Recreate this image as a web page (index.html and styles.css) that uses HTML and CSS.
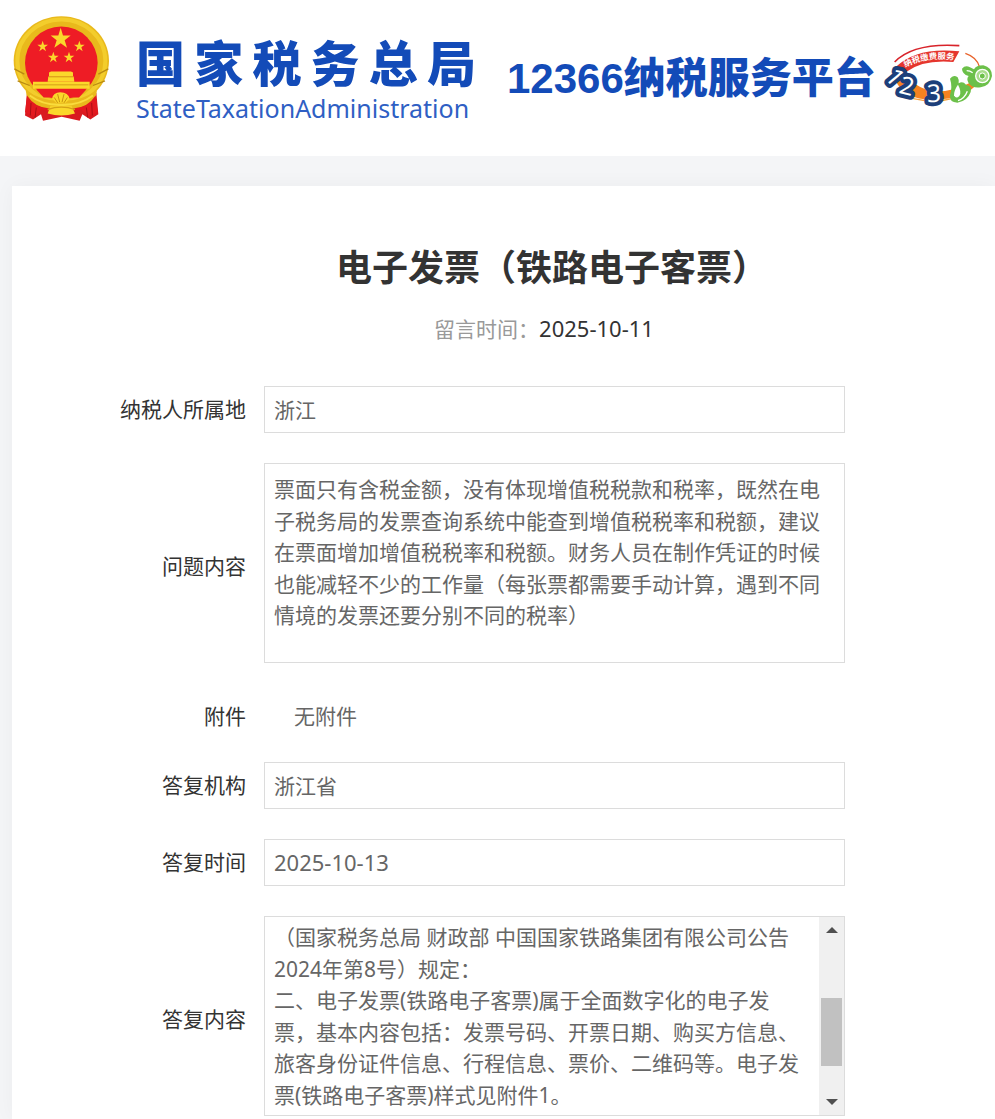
FILE: index.html
```html
<!DOCTYPE html>
<html lang="zh-CN">
<head>
    <meta charset="UTF-8">
    <meta name="viewport" content="width=device-width, initial-scale=1.0">
    <title>电子发票（铁路电子客票）</title>
    <link rel="stylesheet" href="styles.css">
</head>
<body>
    <header class="header">
        <!-- 国徽 -->
        <svg class="emblem" viewBox="0 0 291 321" aria-hidden="true">
            <path d="M42 232 L36 300 L60 312 L84 296 L90 316 L146 304 L200 316 L208 296 L232 312 L256 296 L250 232Z" fill="#d91a20"/>
            <ellipse cx="145" cy="136" rx="143" ry="134" fill="#e9b91c"/>
            <ellipse cx="145" cy="136" rx="132" ry="124" fill="none" stroke="#f3cd2c" stroke-width="12"/>
            <path d="M4 160 L34 176 M14 196 L50 210 M286 160 L256 176 M276 196 L240 210" stroke="#b98a12" stroke-width="4"/>
            <circle cx="145" cy="142" r="109" fill="#ee1c25"/>
            <g fill="#fbd72b">
                <path d="M143 37 L150 60 L173 60 L155 74 L162 97 L143 83 L124 97 L131 74 L113 60 L136 60Z"/>
                <path d="M89 76 L93 88 L105 88 L95 95 L99 107 L89 100 L79 107 L83 95 L73 88 L85 88Z"/>
                <path d="M199 76 L203 88 L215 88 L205 95 L209 107 L199 100 L189 107 L193 95 L183 88 L195 88Z"/>
                <path d="M121 109 L125 121 L137 121 L127 128 L131 140 L121 133 L111 140 L115 128 L105 121 L117 121Z"/>
                <path d="M168 109 L172 121 L184 121 L174 128 L178 140 L168 133 L158 140 L162 128 L152 121 L164 121Z"/>
                <path d="M108 171 L114 168 H174 L180 171 V183 H108Z"/>
                <path d="M106 183 H182 L184 199 H104Z"/>
                <path d="M60 199 H230 V220 H60Z"/>
            </g>
            <path d="M108 184 H180 M64 208 H226" stroke="#d5a017" stroke-width="3"/>
            <path d="M38 224 Q88 258 145 256 Q202 258 252 224 L246 256 Q200 286 145 284 Q90 286 44 256Z" fill="#e9b91c"/>
            <path d="M70 222 H220 L198 246 H92Z" fill="#ee1c25"/>
            <path d="M50 240 Q90 270 145 268 Q200 270 240 240" fill="none" stroke="#f9dc3c" stroke-width="6"/>
            <path d="M117 250 Q120 230 142 230 Q166 230 170 250 L158 262 H130Z" fill="#fbd72b"/>
            <path d="M124 246 L134 262 M134 236 L140 260 M153 236 L147 260 M163 246 L153 262" stroke="#c9920f" stroke-width="3"/>
            <path d="M42 240 Q66 276 106 278 Q145 286 184 278 Q224 276 248 240 L254 290 L226 302 L204 282 L145 296 L86 282 L64 302 L36 290Z" fill="#e3191f"/>
            <path d="M112 272 H176 L186 294 Q145 306 104 294Z" fill="#fbd72b"/>
            <path d="M104 282 Q145 268 186 282" fill="none" stroke="#d5a017" stroke-width="4"/>
            <path d="M54 262 L52 300 M70 276 L66 306 M236 262 L238 300 M220 276 L224 306" stroke="#a80f15" stroke-width="3"/>
        </svg>
        <div class="brand">
            <div class="brand-cn">国家税务总局</div>
            <div class="brand-en">StateTaxationAdministration</div>
        </div>
        <div class="platform"><span class="platform-num">12366</span>纳税服务平台</div>
        <!-- 12366 标志 -->
        <svg class="mascot" viewBox="36 39 330 195" aria-hidden="true">
            <path d="M76 148 Q96 208 190 210 Q290 206 322 160 L300 158 Q250 186 190 184 Q130 172 112 132Z" fill="#f58220"/>
            <path d="M130 206 Q220 228 300 184" fill="none" stroke="#f9a13a" stroke-width="4"/>
            <path d="M286 70 Q322 82 329 112" fill="none" stroke="#e8622a" stroke-width="4"/>
            <path d="M74 96 Q130 38 268 47" fill="none" stroke="#d8232a" stroke-width="5"/>
            <path d="M76 112 Q140 50 268 64 L250 96 Q160 88 108 126Z" fill="#e5352d"/>
            <path id="ribbon" d="M106 112 Q168 78 262 91" fill="none"/>
            <text class="mascot-ribbon"><textPath href="#ribbon">纳税缴费服务</textPath></text>
            <g class="mascot-num">
                <text transform="translate(42 142) rotate(50)">1</text>
                <text transform="translate(84 188) rotate(14)">2</text>
                <text transform="translate(172 217) rotate(-2)">3</text>
            </g>
            <g fill="#6cc04a">
                <path d="M240 146 Q250 132 263 142 Q268 150 266 160 Q278 152 288 164 Q308 168 302 186 Q292 214 262 218 Q238 218 240 196 Q248 170 240 146Z"/>
                <path d="M276 116 Q286 104 300 112 L312 118 Q318 106 340 106 Q366 112 366 138 Q360 168 332 172 Q308 176 296 160 Q288 146 296 138 Q276 132 276 116Z"/>
            </g>
            <path d="M264 164 Q276 186 268 198 Q258 208 252 196 Q252 180 264 164Z" fill="#fff"/>
            <path d="M290 122 Q300 122 308 128 M264 212 Q284 206 292 184" fill="none" stroke="#fff" stroke-width="4"/>
            <circle cx="337" cy="138" r="20" fill="#a9dc8c" stroke="#fff" stroke-width="4"/>
            <circle cx="337" cy="138" r="9" fill="#6cc04a" stroke="#fff" stroke-width="3"/>
        </svg>
    </header>

    <main class="card">
        <h1 class="title">电子发票（铁路电子客票）</h1>
        <p class="meta">留言时间：<time class="date" datetime="2025-10-11">2025-10-11</time></p>

        <form class="form">
            <label for="area">纳税人所属地</label>
            <input class="field" id="area" type="text" value="浙江" readonly>

            <label class="label-area" for="question">问题内容</label>
            <textarea class="field field-area" id="question" readonly>票面只有含税金额，没有体现增值税税款和税率，既然在电子税务局的发票查询系统中能查到增值税税率和税额，建议在票面增加增值税税率和税额。财务人员在制作凭证的时候也能减轻不少的工作量（每张票都需要手动计算，遇到不同情境的发票还要分别不同的税率）</textarea>

            <span class="label-text">附件</span>
            <span class="attachment">无附件</span>

            <label for="org">答复机构</label>
            <input class="field" id="org" type="text" value="浙江省" readonly>

            <label for="reply-time">答复时间</label>
            <input class="field date" id="reply-time" type="text" value="2025-10-13" readonly>

            <label class="label-area" for="reply">答复内容</label>
            <div class="reply-box">
                <textarea class="reply-text" id="reply" readonly>（国家税务总局 财政部 中国国家铁路集团有限公司公告2024年第8号）规定：
二、电子发票(铁路电子客票)属于全面数字化的电子发票，基本内容包括：发票号码、开票日期、购买方信息、旅客身份证件信息、行程信息、票价、二维码等。电子发票(铁路电子客票)样式见附件1。</textarea>
                <div class="scrollbar">
                    <span class="arrow arrow-up"></span>
                    <span class="thumb"></span>
                    <span class="arrow arrow-down"></span>
                </div>
            </div>
        </form>
    </main>
</body>
</html>
```
FILE: styles.css
```css
* {
    box-sizing: border-box;
}
body {
    margin: 0;
    min-height: 100vh;
    display: flex;
    flex-direction: column;
    background: #f4f5f7;
    color: #333;
    font: 21px/1.5 "Noto Sans", "Noto Sans CJK SC", sans-serif;
    overflow-x: hidden;
}
.header {
    display: flex;
    align-items: center;
    height: 156px;
    padding: 0 3px 18px 13px;
    background: #fff;
    color: #134bb8;
    white-space: nowrap;
}
.emblem {
    flex: none;
    width: 97px;
    height: 108px;
}
.brand {
    flex: none;
    width: 340px;
    margin-left: 26px;
    padding-top: 22px;
}
.brand-cn {
    font: 900 49px/50px "Noto Sans CJK SC", sans-serif;
    text-align: justify;
    text-align-last: justify;
}
.brand-en {
    padding-top: 6px;
    color: #2f5fc4;
    font-size: 25px;
    line-height: 32px;
}
.platform {
    margin-left: 31px;
    padding-top: 16px;
    font: 900 42px/60px "Noto Sans CJK SC", sans-serif;
}
.platform-num {
    font: bold 42px/60px "Liberation Sans", sans-serif;
}
.mascot {
    flex: none;
    width: 110px;
    height: 65px;
    margin-top: 12px;
    margin-left: auto;
    overflow: visible;
}
.mascot-ribbon {
    fill: #fff;
    font: bold 25px "Noto Sans CJK SC", sans-serif;
}
.mascot-num {
    fill: #fff;
    stroke: #1d3f7a;
    stroke-width: 24px;
    stroke-linejoin: round;
    paint-order: stroke;
    font: 74px "Noto Sans", sans-serif;
}
.card {
    flex: 1;
    margin: 30px 0 0 12px;
    padding: 54px 0 0 97px;
    background: #fff;
    box-shadow: 0 0 20px rgba(0, 0, 0, .04);
}
.title {
    margin: 0;
    font-size: 36px;
    line-height: 56px;
    text-align: center;
}
.meta {
    margin: 16px 0 41px;
    padding-right: 16px;
    color: #999;
    line-height: 32px;
    text-align: center;
}
.meta .date {
    color: #333;
}
.date {
    font-size: 22px;
}
.form {
    display: grid;
    grid-template-columns: 137px 1fr;
    gap: 30px 18px;
    align-items: center;
    padding-right: 150px;
}
.form label,
.label-text {
    text-align: right;
}
.form .label-area {
    padding-top: 8px;
}
.field,
.reply-box {
    width: 100%;
    border: 1px solid #dcdcdc;
    background: #fff;
}
.field,
.reply-text {
    padding: 0 9px;
    color: #666;
    font-family: inherit;
    font-size: 21px;
    line-height: 1.5;
    outline: none;
    resize: none;
}
.field {
    height: 47px;
    padding-bottom: 2px;
    border-radius: 0;
}
.field.date {
    font-size: 22px;
}
.field-area {
    display: block;
    height: 200px;
    padding: 10px 9px;
}
.label-text,
.attachment {
    padding-top: 8px;
    line-height: 31px;
}
.attachment {
    padding-left: 30px;
    color: #666;
}
.reply-box {
    display: flex;
    height: 200px;
}
.reply-text {
    flex: 1;
    padding: 5px 9px 0;
    border: 0;
    overflow: hidden;
}
.scrollbar {
    display: flex;
    flex-direction: column;
    align-items: center;
    width: 25px;
    padding: 10px 0;
    background: #f0f0f0;
}
.arrow {
    border: 6px solid transparent;
}
.arrow-up {
    border-top: 0;
    border-bottom-color: #505050;
}
.arrow-down {
    border-bottom: 0;
    border-top-color: #505050;
}
.thumb {
    width: 21px;
    height: 68px;
    margin: auto 0 33px;
    background: #c1c1c1;
}
```
